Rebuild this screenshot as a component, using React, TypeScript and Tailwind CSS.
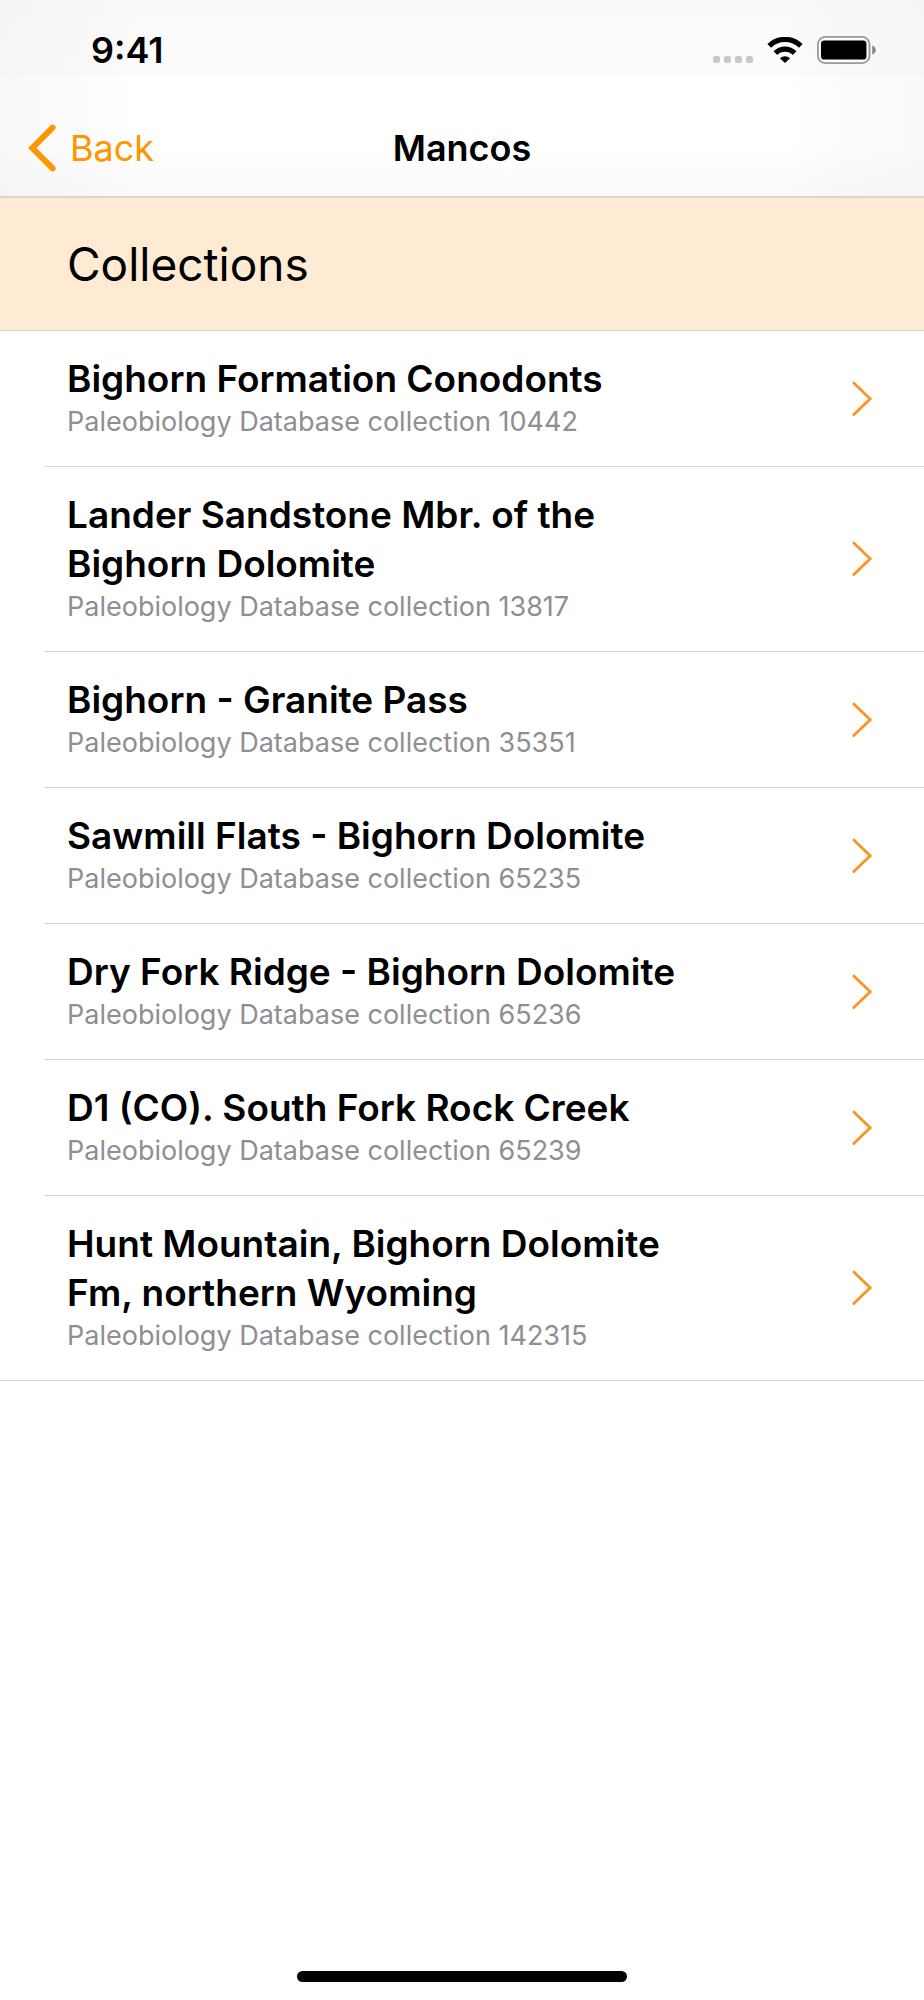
type Collection = { id: number; name: string };

const collections: Collection[] = [
  { id: 10442, name: "Bighorn Formation Conodonts" },
  { id: 13817, name: "Lander Sandstone Mbr. of the Bighorn Dolomite" },
  { id: 35351, name: "Bighorn - Granite Pass" },
  { id: 65235, name: "Sawmill Flats - Bighorn Dolomite" },
  { id: 65236, name: "Dry Fork Ridge - Bighorn Dolomite" },
  { id: 65239, name: "D1 (CO). South Fork Rock Creek" },
  { id: 142315, name: "Hunt Mountain, Bighorn Dolomite Fm, northern Wyoming" },
];

function StatusBar() {
  return (
    <div className="flex h-[100px] items-center justify-between pr-12 pl-[91px]">
      <span className="text-[36px] leading-[44px] font-semibold">9:41</span>
      <div className="flex items-center">
        <div className="mt-[19px] flex gap-1" aria-label="No signal">
          <span className="size-[7px] rounded-[2px] bg-[#c9c9c9]" />
          <span className="size-[7px] rounded-[2px] bg-[#c9c9c9]" />
          <span className="size-[7px] rounded-[2px] bg-[#c9c9c9]" />
          <span className="size-[7px] rounded-[2px] bg-[#c9c9c9]" />
        </div>
        <svg className="ml-3.5 h-[26px] w-9" viewBox="0 0 36 26" aria-label="Wi-Fi">
          <path d="M2.2 8.9A22.4 22.4 0 0 1 33.8 8.9" fill="none" stroke="#000" strokeWidth="5.2" />
          <path d="M8.4 16.1A13.6 13.6 0 0 1 27.6 16.1" fill="none" stroke="#000" strokeWidth="5.2" />
          <path d="M12.9 21.2a7.8 7.8 0 0 1 10.2 0L18 26Z" fill="#000" />
        </svg>
        <svg className="ml-3.5 h-7 w-[59px]" viewBox="0 0 59 28" aria-label="Battery full">
          <rect x="0.9" y="0.9" width="51.6" height="26.2" rx="7.4" fill="none" stroke="#999" strokeWidth="1.8" />
          <rect x="4" y="4.4" width="45.4" height="19.2" rx="3.4" fill="#000" />
          <path d="M55.2 9.6c2.2.6 3.6 2.4 3.6 4.4s-1.4 3.8-3.6 4.4Z" fill="#888" />
        </svg>
      </div>
    </div>
  );
}

function NavBar() {
  return (
    <nav className="grid h-24 grid-cols-3 items-center px-7">
      <button type="button" className="flex items-center gap-3.5 justify-self-start text-[#ff9500]">
        <svg className="h-12 w-7" viewBox="0 0 28 48" aria-hidden="true">
          <path
            d="M24.6 3.6 4.3 24l20.3 20.4"
            fill="none"
            stroke="currentColor"
            strokeWidth="6"
            strokeLinecap="round"
            strokeLinejoin="miter"
          />
        </svg>
        <span className="text-[36px] leading-[44px]">Back</span>
      </button>
      <h1 className="justify-self-center text-[36px] leading-[44px] font-semibold">Mancos</h1>
    </nav>
  );
}

function CollectionRow({ item }: { item: Collection }) {
  return (
    <li className="group pl-[45px] last:pl-0">
      <a
        href={`#collection-${item.id}`}
        className="flex items-center justify-between border-b border-[#d6d6d6] pt-[23px] pr-[50px] pb-[25px] pl-[22px] group-last:pl-[67px]"
      >
        <div className="max-w-[640px]">
          <h3 className="text-[37px] leading-[49px] font-semibold">{item.name}</h3>
          <p className="text-[27px] leading-[38px] text-[#8e8e93]">
            Paleobiology Database collection {item.id}
          </p>
        </div>
        <svg className="h-9 w-[22px] shrink-0" viewBox="0 0 22 36" aria-hidden="true">
          <path
            d="M1.8 3 18.2 18.8 1.8 34.6"
            fill="none"
            stroke="#ff9322"
            strokeWidth="2.8"
            strokeLinecap="round"
          />
        </svg>
      </a>
    </li>
  );
}

export default function App() {
  return (
    <div className="flex min-h-screen flex-col bg-white font-[Inter,'Liberation_Sans',sans-serif] text-black">
      <header className="border-b-2 border-[#dbd6ce] bg-[linear-gradient(to_right,#00000006,#00000003_80px,transparent_140px),linear-gradient(to_left,#00000005,#00000003_80px,transparent_140px),linear-gradient(#fafafa,#fcfcfc_36%,#ffffff_42%,#ffffff_75%,#fafafa)]">
        <StatusBar />
        <NavBar />
      </header>
      <main className="flex-1">
        <section>
          <h2 className="border-b border-[#d8d2ca] bg-[#ffebd3] px-[67px] py-9 text-[46px] leading-[60px]">
            Collections
          </h2>
          <ul>
            {collections.map((item) => (
              <CollectionRow key={item.id} item={item} />
            ))}
          </ul>
        </section>
      </main>
      <footer className="flex justify-center pb-[18px]">
        <div className="h-[11px] w-[330px] rounded-full bg-black" />
      </footer>
    </div>
  );
}
